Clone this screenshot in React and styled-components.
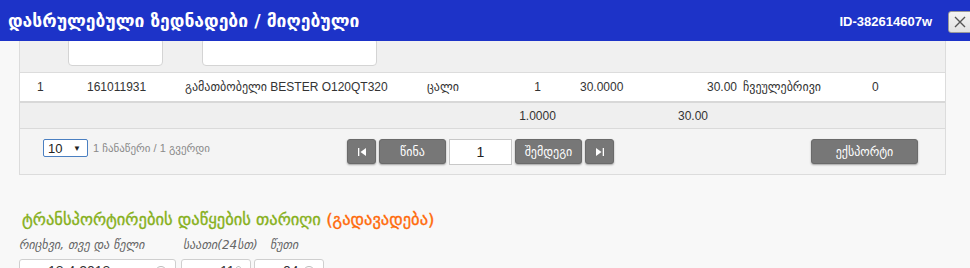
import styled, { createGlobalStyle } from "styled-components";

const GlobalStyle = createGlobalStyle`
  html, body {
    margin: 0;
    padding: 0;
    background: #f8f8f8;
    font-family: "Liberation Sans", "DejaVu Sans", Arial, sans-serif;
    overflow: hidden;
  }
  * {
    box-sizing: border-box;
  }
`;

const Header = styled.div`
  position: fixed;
  top: 0;
  left: 0;
  right: 0;
  height: 41px;
  background: #1d33c8;
  display: flex;
  align-items: center;
  padding: 0 0 0 8px;
  z-index: 10;
`;

const Title = styled.h1`
  margin: 0;
  flex: 1;
  color: #fff;
  font-size: 17.5px;
  font-weight: bold;
  font-family: "DejaVu Sans", sans-serif;
`;

const DocId = styled.span`
  color: #fff;
  font-size: 13px;
  font-weight: bold;
  margin-right: 16px;
  margin-top: 2px;
`;

const CloseButton = styled.button`
  width: 30px;
  height: 22px;
  margin-right: -8px;
  margin-top: 2px;
  padding: 0 0 0 4px;
  display: flex;
  align-items: center;
  background: linear-gradient(#f4f4f4, #e2e2e2);
  border: 1px solid #9a9a9a;
  border-radius: 3px;
`;

const Content = styled.div`
  padding: 33px 0 0 19px;
`;

const Panel = styled.div`
  width: 927px;
  border: 1px solid #dcdcdc;
  background: #f0f0f0;
`;

const cols = "42px 110px 238px 90px 75px 85px 80px 120px 85px";

const FilterRow = styled.div`
  display: grid;
  grid-template-columns: ${cols};
  height: 39px;
  border-bottom: 1px solid #dcdcdc;
  background: #f0f0f0;
`;

const FilterInput = styled.div`
  margin-top: 4px;
  margin-left: ${(p) => p.$left}px;
  width: ${(p) => p.$width}px;
  height: 28px;
  background: #fff;
  border: 1px solid #d4d4d4;
  border-radius: 4px;
`;

const Row = styled.div`
  display: grid;
  grid-template-columns: ${cols};
  align-items: center;
  height: ${(p) => (p.$total ? 26 : 30)}px;
  background: ${(p) => (p.$total ? "#efefef" : "#fff")};
  border-bottom: ${(p) => (p.$total ? "1px solid #dadada" : "2px solid #d8d8d8")};
  font-size: 12px;
  color: #333;
`;

const Cell = styled.div`
  padding-left: ${(p) => p.$pl || 0}px;
  padding-right: ${(p) => p.$pr || 0}px;
  text-align: ${(p) => p.$align || "left"};
  white-space: nowrap;
`;

const Pager = styled.div`
  display: flex;
  align-items: flex-start;
  height: 45px;
  padding: 10px 27px 0 23px;
  background: #f4f4f4;
`;

const PageSize = styled.div`
  width: 45px;
  height: 18px;
  border: 1px solid #4a7fc1;
  border-radius: 2px;
  background: #fff;
  display: flex;
  align-items: center;
  justify-content: space-between;
  padding: 0 6px 0 4px;
  font-size: 13px;
  color: #222;
`;

const Caret = styled.span`
  font-size: 8px;
`;

const PageInfo = styled.span`
  margin-left: 5px;
  width: 254px;
  font-size: 11px;
  line-height: 18px;
  color: #8a8a8a;
`;

const Nav = styled.div`
  display: flex;
  gap: 3px;
`;

const GreyButton = styled.button`
  width: ${(p) => p.$w}px;
  height: 25px;
  padding: 0;
  background: #777;
  border: 1px solid #6a6a6a;
  border-radius: 3px;
  box-shadow: 0 1px 2px rgba(0, 0, 0, 0.35);
  color: #fff;
  font-size: 12px;
  font-family: "DejaVu Sans", sans-serif;
  display: flex;
  align-items: center;
  justify-content: center;
`;

const PageInput = styled.div`
  width: 63px;
  height: 26px;
  background: #fff;
  border: 1px solid #c8c8c8;
  display: flex;
  align-items: center;
  justify-content: center;
  font-size: 14px;
  color: #222;
`;

const Spacer = styled.div`
  flex: 1;
`;

const Section = styled.div`
  padding: 35px 0 0 3px;
`;

const SectionTitle = styled.h2`
  margin: 0;
  font-size: 16.5px;
  font-weight: normal;
  line-height: 20px;
  color: #86b01a;
  font-family: "DejaVu Sans", sans-serif;
  -webkit-text-stroke: 0.35px currentColor;
`;

const Postponed = styled.span`
  color: #ff6a0a;
`;

const Fields = styled.div`
  display: flex;
  gap: 5px;
  margin-top: 7px;
  margin-left: -3px;
`;

const Field = styled.div`
  display: flex;
  flex-direction: column;
  width: ${(p) => p.$w}px;
  margin-right: ${(p) => p.$mr || 0}px;
`;

const FieldLabel = styled.label`
  font-size: 12px;
  font-style: italic;
  color: #666;
  line-height: 16px;
  height: 22px;
  padding-left: ${(p) => p.$pl || 0}px;
  white-space: nowrap;
  font-family: "DejaVu Sans", sans-serif;
`;

const FieldInput = styled.div`
  height: 30px;
  background: #fff;
  border: 1px solid #cfcfcf;
  border-radius: 3px;
  display: flex;
  align-items: flex-start;
  justify-content: space-between;
  padding: 3px 8px 0 ${(p) => p.$pl}px;
  font-size: 14px;
  line-height: 16px;
  color: #333;
`;

const ClearDot = styled.span`
  width: 12px;
  height: 12px;
  margin-top: 3px;
  border-radius: 50%;
  border: 1px solid #bbb;
`;

export default function App() {
  return (
    <>
      <GlobalStyle />
      <Header>
        <Title>დასრულებული ზედნადები / მიღებული</Title>
        <DocId>ID-382614607w</DocId>
        <CloseButton aria-label="close">
          <svg width="14" height="14" viewBox="0 0 14 14">
            <path d="M2 2 L12 12 M12 2 L2 12" stroke="#555" strokeWidth="1.4" />
          </svg>
        </CloseButton>
      </Header>
      <Content>
        <Panel>
          <FilterRow>
            <div />
            <FilterInput $left={6} $width={95} />
            <FilterInput $left={30} $width={175} />
          </FilterRow>
          <Row>
            <Cell $pl={17}>1</Cell>
            <Cell $pl={25}>161011931</Cell>
            <Cell $pl={13}>გამათბობელი BESTER O120QT320</Cell>
            <Cell $pl={17}>ცალი</Cell>
            <Cell $align="center">1</Cell>
            <Cell $pl={5}>30.0000</Cell>
            <Cell $align="right" $pr={3}>30.00</Cell>
            <Cell $pl={3}>ჩვეულებრივი</Cell>
            <Cell $pl={12}>0</Cell>
          </Row>
          <Row $total>
            <div />
            <div />
            <div />
            <div />
            <Cell $align="center">1.0000</Cell>
            <div />
            <Cell $pl={18}>30.00</Cell>
          </Row>
          <Pager>
            <PageSize>
              10 <Caret>▼</Caret>
            </PageSize>
            <PageInfo>1 ჩანაწერი / 1 გვერდი</PageInfo>
            <Nav>
              <GreyButton $w={29}>
                <svg width="10" height="10" viewBox="0 0 10 10">
                  <rect x="1" y="1" width="1.3" height="8" fill="#fff" />
                  <path d="M9 1 L3.5 5 L9 9 Z" fill="#fff" />
                </svg>
              </GreyButton>
              <GreyButton $w={67}>წინა</GreyButton>
              <PageInput>1</PageInput>
              <GreyButton $w={67}>შემდეგი</GreyButton>
              <GreyButton $w={29}>
                <svg width="10" height="10" viewBox="0 0 10 10">
                  <path d="M1 1 L6.5 5 L1 9 Z" fill="#fff" />
                  <rect x="7.7" y="1" width="1.3" height="8" fill="#fff" />
                </svg>
              </GreyButton>
            </Nav>
            <Spacer />
            <GreyButton $w={107}>ექსპორტი</GreyButton>
          </Pager>
        </Panel>
        <Section>
          <SectionTitle>
            ტრანსპორტირების დაწყების თარიღი <Postponed>(გადავადება)</Postponed>
          </SectionTitle>
          <Fields>
            <Field $w={157}>
              <FieldLabel>რიცხვი, თვე და წელი</FieldLabel>
              <FieldInput $pl={28}>
                18.4.2018 <ClearDot />
              </FieldInput>
            </Field>
            <Field $w={70} $mr={-2}>
              <FieldLabel $pl={2}>საათი(24სთ)</FieldLabel>
              <FieldInput $pl={38}>
                11 <ClearDot />
              </FieldInput>
            </Field>
            <Field $w={70}>
              <FieldLabel $pl={16}>წუთი</FieldLabel>
              <FieldInput $pl={28}>
                04 <ClearDot />
              </FieldInput>
            </Field>
          </Fields>
        </Section>
      </Content>
    </>
  );
}
